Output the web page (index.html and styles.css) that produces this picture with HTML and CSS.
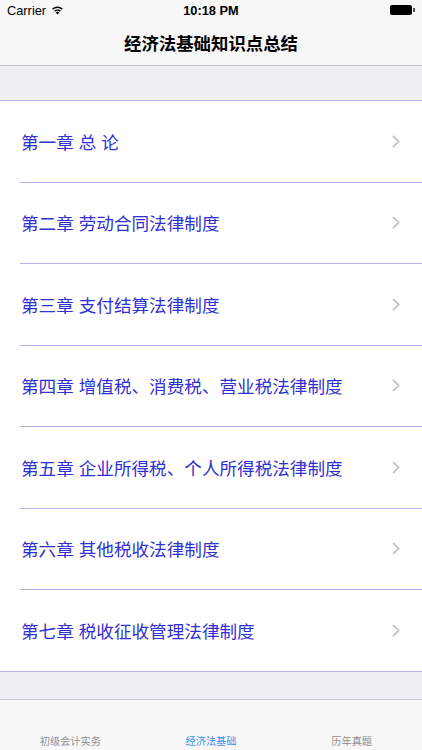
FILE: index.html
```html
<!DOCTYPE html>
<html lang="zh-CN">
<head>
  <meta charset="UTF-8" />
  <meta name="viewport" content="width=device-width, initial-scale=1.0" />
  <title>经济法基础知识点总结</title>
  <link rel="stylesheet" href="styles.css">
</head>
<body>
  <div class="screen">
    <div class="status-bar">
      <div class="carrier">
        Carrier
        <svg class="wifi" width="13" height="10" viewBox="0 0 12 9">
          <path d="M6 8.6L7.6 6.9a2.3 2.3 0 0 0-3.2 0z" fill="#000"/>
          <path d="M2.9 5.3a4.4 4.4 0 0 1 6.2 0l-.9.9a3.1 3.1 0 0 0-4.4 0z" fill="#000"/>
          <path d="M1 3.4a7.1 7.1 0 0 1 10 0l-.9.9a5.8 5.8 0 0 0-8.2 0z" fill="#000"/>
        </svg>
      </div>
      <div class="time">10:18 PM</div>
      <div class="battery"><span class="battery-body"></span><span class="battery-nub"></span></div>
    </div>

    <header class="nav-bar">
      <h1>经济法基础知识点总结</h1>
    </header>

    <div class="section-gap"></div>

    <ul class="chapters">
      <li><span class="title">第一章 总 论</span><svg class="chevron" width="8" height="13" viewBox="0 0 8 13"><path d="M1 1l5.8 5.5L1 12"/></svg></li>
      <li><span class="title">第二章 劳动合同法律制度</span><svg class="chevron" width="8" height="13" viewBox="0 0 8 13"><path d="M1 1l5.8 5.5L1 12"/></svg></li>
      <li><span class="title">第三章 支付结算法律制度</span><svg class="chevron" width="8" height="13" viewBox="0 0 8 13"><path d="M1 1l5.8 5.5L1 12"/></svg></li>
      <li><span class="title">第四章 增值税、消费税、营业税法律制度</span><svg class="chevron" width="8" height="13" viewBox="0 0 8 13"><path d="M1 1l5.8 5.5L1 12"/></svg></li>
      <li><span class="title">第五章 企业所得税、个人所得税法律制度</span><svg class="chevron" width="8" height="13" viewBox="0 0 8 13"><path d="M1 1l5.8 5.5L1 12"/></svg></li>
      <li><span class="title">第六章 其他税收法律制度</span><svg class="chevron" width="8" height="13" viewBox="0 0 8 13"><path d="M1 1l5.8 5.5L1 12"/></svg></li>
      <li><span class="title">第七章 税收征收管理法律制度</span><svg class="chevron" width="8" height="13" viewBox="0 0 8 13"><path d="M1 1l5.8 5.5L1 12"/></svg></li>
    </ul>

    <div class="footer-gap"></div>

    <nav class="tab-bar">
      <div class="tab">初级会计实务</div>
      <div class="tab active">经济法基础</div>
      <div class="tab">历年真题</div>
    </nav>
  </div>
</body>
</html>
```

FILE: styles.css
```css
body {
  margin: 0;
  font-family: "Liberation Sans", "Noto Sans CJK SC", sans-serif;
  background-color: #efeff4;
}
.screen {
  height: 750px;
  display: flex;
  flex-direction: column;
  overflow: hidden;
}
.status-bar {
  height: 20px;
  background-color: #f7f7f7;
  display: flex;
  align-items: center;
  justify-content: space-between;
  padding: 0 7px;
  font-size: 12.8px;
  color: #000;
}
.carrier {
  width: 100px;
  display: flex;
  align-items: center;
  gap: 5px;
}
.time {
  font-weight: bold;
  font-size: 12.8px;
}
.battery {
  width: 100px;
  display: flex;
  justify-content: flex-end;
  align-items: center;
}
.battery-body {
  width: 22px;
  height: 10px;
  background-color: #000;
  border-radius: 2px;
}
.battery-nub {
  width: 1.5px;
  height: 4px;
  background-color: #555;
  margin-left: 1px;
}
.nav-bar {
  height: 45px;
  background-color: #f7f7f7;
  border-bottom: 1px solid #c8c7cc;
  display: flex;
  align-items: center;
  justify-content: center;
}
.nav-bar h1 {
  margin: 0;
  font-family: "Noto Sans CJK SC", sans-serif;
  font-size: 17.4px;
  font-weight: bold;
  color: #000;
}
.section-gap {
  height: 34px;
}
.chapters {
  list-style: none;
  margin: 0;
  padding: 0;
  background-color: #fff;
  border-top: 1px solid #b4b4ec;
  border-bottom: 1px solid #b4b4ec;
}
.chapters li {
  height: 80.5px;
  margin-left: 20px;
  padding: 0 22px 0 1px;
  border-bottom: 1px solid #b4b4ec;
  display: flex;
  align-items: center;
  justify-content: space-between;
}
.chapters li:last-child {
  border-bottom: none;
}
.title {
  font-family: "Noto Sans CJK SC", sans-serif;
  font-size: 17.6px;
  color: #3030d4;
  word-spacing: 1px;
}
.chevron path {
  fill: none;
  stroke: #c4c4ca;
  stroke-width: 1.8;
}
.footer-gap {
  flex: 1;
}
.tab-bar {
  height: 50px;
  flex-shrink: 0;
  background-color: #f7f7f8;
  border-top: 1px solid #c8c7cc;
  display: flex;
}
.tab {
  flex: 1;
  display: flex;
  align-items: flex-end;
  justify-content: center;
  padding-bottom: 2px;
  font-family: "Noto Sans CJK SC", sans-serif;
  font-size: 10.2px;
  color: #8e8e93;
}
.tab.active {
  color: #3b8ff0;
}
```
